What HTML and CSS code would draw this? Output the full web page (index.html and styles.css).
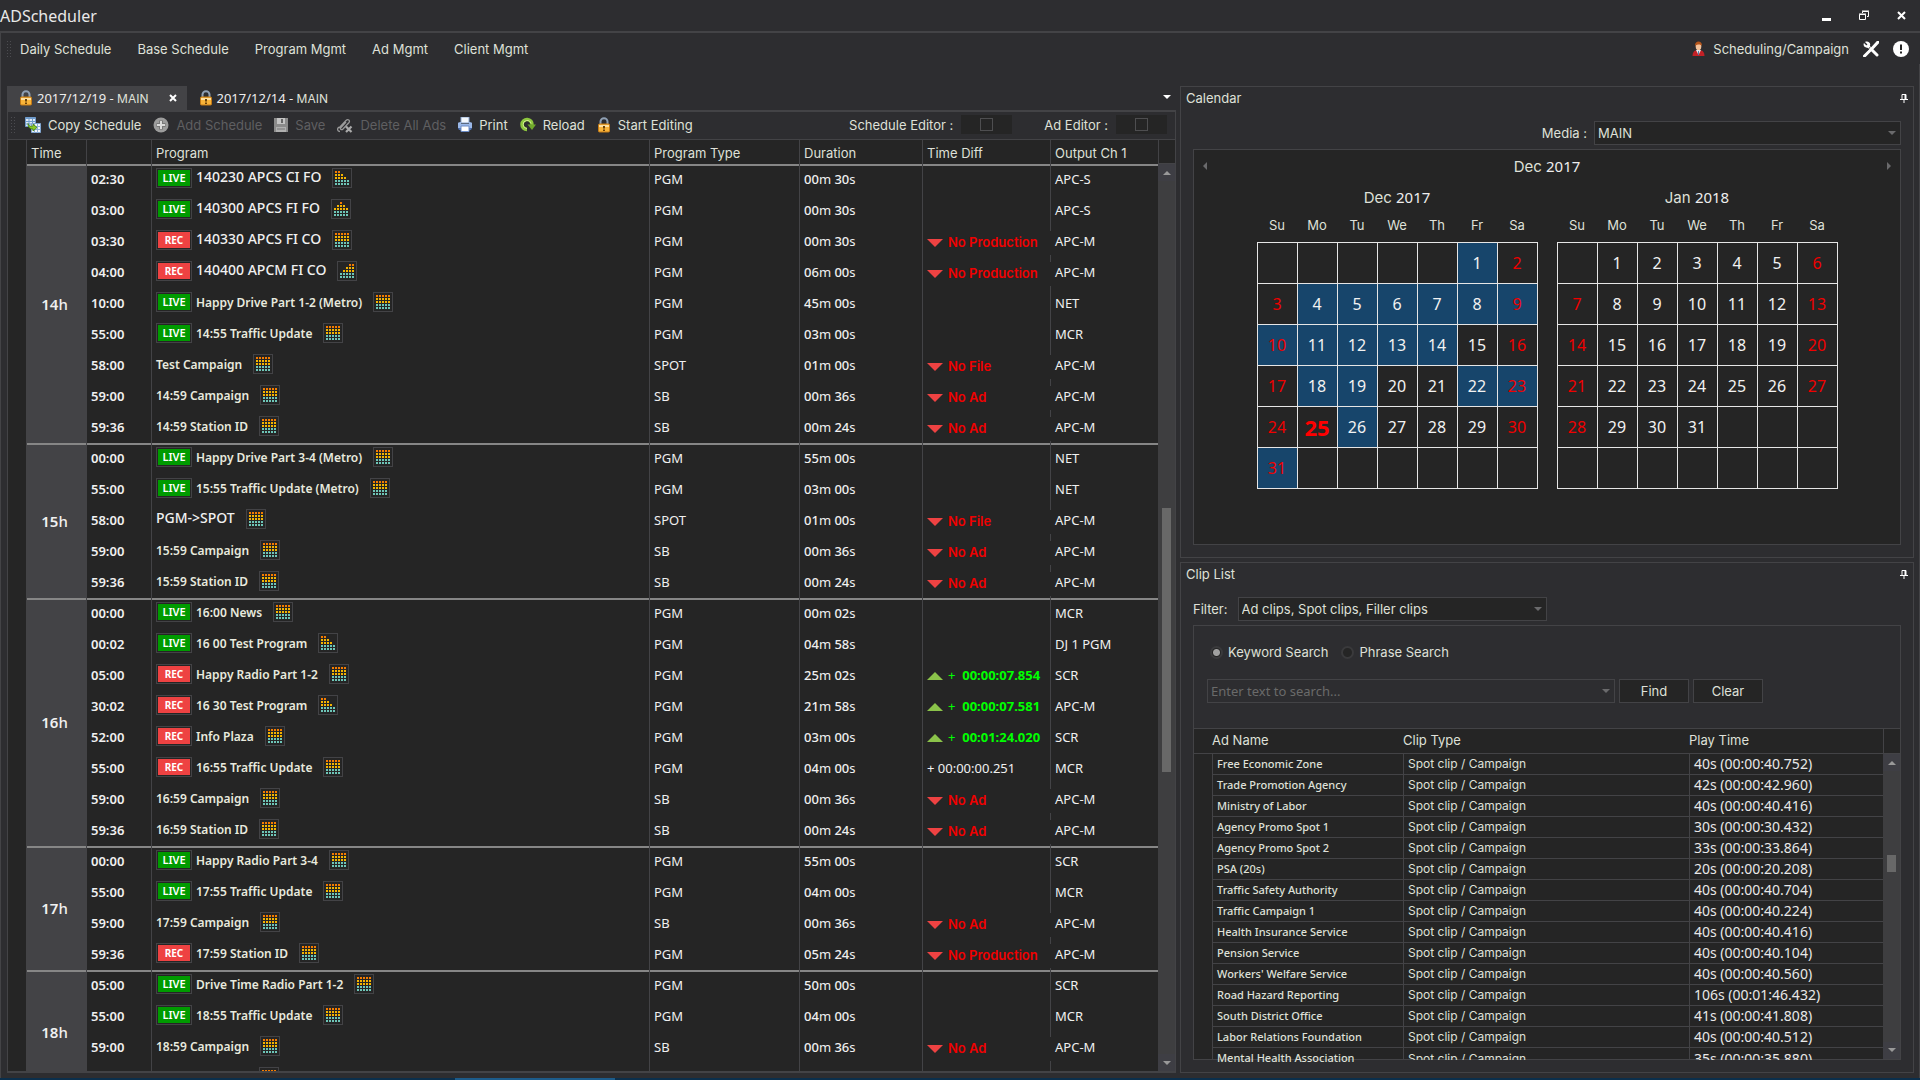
FILE: index.html
```html
<!DOCTYPE html>
<html lang="en">
<head>
<meta charset="utf-8">
<title>ADScheduler</title>
<link rel="stylesheet" href="styles.css">
</head>
<body>
<svg class="defs" aria-hidden="true">
  <symbol id="full" viewBox="0 0 20 20"><rect class="cell" x=".5" y=".5" width="19" height="19"/><path class="hi" d="M3 4h14"/><path class="mid" d="M3 7h14M3 10h14"/><path class="low" d="M3 13h14M3 16h14"/></symbol>
  <symbol id="fadeout" viewBox="0 0 20 20"><rect class="cell" x=".5" y=".5" width="19" height="19"/><path class="hi" d="M3 4h5"/><path class="mid" d="M3 7h8M3 10h11"/><path class="low" d="M3 13h14M3 16h14"/></symbol>
  <symbol id="fadein" viewBox="0 0 20 20"><rect class="cell" x=".5" y=".5" width="19" height="19"/><path class="hi" d="M12 4h5"/><path class="mid" d="M9 7h8M6 10h11"/><path class="low" d="M3 13h14M3 16h14"/></symbol>
  <symbol id="fadeboth" viewBox="0 0 20 20"><rect class="cell" x=".5" y=".5" width="19" height="19"/><path class="hi" d="M9 4h2"/><path class="mid" d="M6 7h8M3 10h14"/><path class="low" d="M3 13h14M3 16h14"/></symbol>
  <symbol id="lock" viewBox="0 0 14 16"><path d="M3.500 8V4.500a3.500 3.300 0 0 1 7 0V8" fill="none" stroke="#8fa0b4" stroke-width="2"/><rect x="1.500" y="7" width="11" height="8" rx="1" fill="#f9b43a" stroke="#c47b17"/><path d="M2 8h10v2H2z" fill="#ffe0a0"/><path d="M7 9v2.500M7 12.500v1.500" stroke="#6b4208" stroke-width="2"/></symbol>
  <symbol id="pin" viewBox="0 0 8 9"><path d="M2 5V.5h4V5M0 5.500h8M4 6v3" fill="none" stroke="#fff"/><path d="M4.500 1h1.500v4H4.500z" fill="#fff"/></symbol>
</svg>

<div class="window">
  <header class="titlebar">
    <h1>ADScheduler</h1>
    <div class="window-buttons">
      <button aria-label="Minimize"><svg width="10" height="12"><path d="M0 8h9v3H0z" fill="#fff"/></svg></button>
      <button aria-label="Restore"><svg width="11" height="11"><path d="M3.500 3V1.500h6v5H8M3 1h7" fill="none" stroke="#fff"/><path d="M.5 4.500h6v5h-6zM0 4h7" fill="none" stroke="#fff"/></svg></button>
      <button aria-label="Close"><svg width="9" height="9"><path d="M1 1l7 7M8 1L1 8" stroke="#fff" stroke-width="2"/></svg></button>
    </div>
  </header>

  <nav class="menubar">
    <span class="grip"></span>
    <div class="menus">
      <a href="#">Daily Schedule</a><a href="#">Base Schedule</a><a href="#">Program Mgmt</a><a href="#">Ad Mgmt</a><a href="#">Client Mgmt</a>
    </div>
    <div class="account">
      <svg width="13" height="16"><path d="M.5 15c0-3.500 1.500-5 3-5.500h6c1.500.5 3 2 3 5.500z" fill="#c32026"/><path d="M4 9h5l-2.500 5z" fill="#e8edf2"/><path d="M6.500 10v4" stroke="#5a7ea6"/><ellipse cx="6.500" cy="5.500" rx="2.800" ry="3.800" fill="#f3c199"/><path d="M3 5c-.5-6 7.500-6 7 0-1-2-5-2-7 0z" fill="#b5551b"/></svg>
      <span>Scheduling/Campaign</span>
      <button aria-label="Settings"><svg width="16" height="16"><path d="M15 1L9.500 7M7.500 9L1.500 15" stroke="#fff" stroke-width="3" stroke-linecap="round"/><path d="M5 5l9 9" stroke="#fff" stroke-width="3" stroke-linecap="round"/><path d="M2 1l2.500 2.500-1 1L1 2C-.5 4.500 2 7.500 5 6.500l2-2C8 2 5-.5 2 1z" fill="#fff"/><path d="M7.500 5.500l-3 4" stroke="#2d2d30" stroke-width=".8"/></svg></button>
      <button aria-label="Alerts"><svg width="16" height="16"><circle cx="8" cy="8" r="8" fill="#fff"/><path d="M8 3.500v5.500M8 10.500v2" stroke="#222" stroke-width="2"/></svg></button>
    </div>
  </nav>

  <main class="workspace">
    <section class="schedule">
      <div class="tabs">
        <button class="tab active"><svg class="lock"><use href="#lock"/></svg><span>2017/12/19 - <i>MAIN</i></span><svg class="close" width="8" height="8"><path d="M1 1l6 6M7 1L1 7" stroke="#fff" stroke-width="2"/></svg></button>
        <button class="tab"><svg class="lock"><use href="#lock"/></svg><span>2017/12/14 - <i>MAIN</i></span></button>
        <span class="caret-white"></span>
      </div>
      <div class="frame">
        <div class="toolbar">
          <span class="grip"></span>
          <button><svg width="16" height="16"><path d="M.5.5h10v9H.5z" fill="#dfeaf6" stroke="#6f9bcb"/><path d="M.5 1.500h10M.5 4.500h10M.5 7h10M4 1v8M7.500 1v8" stroke="#6f9bcb"/><path d="M6.500 6.500h9v9h-9z" fill="#f2f6fb" stroke="#7ea3cf"/><path d="M6.500 9.500h9M6.500 12.500h9M9.500 7v9M12.500 7v9" stroke="#8fb0d6"/><path d="M3 6.500c1 3 3 3 5 2.500V7l4 3.500-4 3.500v-2C5 12 3 10.500 3 6.500z" fill="#8ac926" stroke="#3f7d12" stroke-width=".8"/></svg>Copy Schedule</button>
          <button disabled><svg width="16" height="16"><circle cx="8" cy="8" r="7.500" fill="#9c9c9c"/><path d="M8 3.500v9M3.500 8h9" stroke="#777" stroke-width="4"/><path d="M8 4v8M4 8h8" stroke="#dadada" stroke-width="2"/></svg>Add Schedule</button>
          <button disabled><svg width="14" height="14"><path d="M0 0h14v14H0z" fill="#8b8b8b"/><path d="M3 0h8v6H3z" fill="#c4c4c4"/><path d="M7 1h2v4H7z" fill="#666"/><path d="M2 9h10v5H2z" fill="#b0b0b0"/><path d="M3 11h8" stroke="#777"/></svg>Save</button>
          <button disabled><svg width="16" height="16"><path d="M2 11L9 3.500c2-2 4.500 0 3 2L6 12c-1.500 1.500-3.500 0-2-1.500L9 5M3 14.500c-3 0-3-3-1-4.500" fill="none" stroke="#9a9a9a" stroke-width="1.300"/><path d="M9 9.500l5.500 5.500M14.500 9.500L9 15" stroke="#aaa" stroke-width="2.200"/></svg>Delete All Ads</button>
          <button><svg width="14" height="15"><path d="M3 0h8v6H3z" fill="#f4f8fd" stroke="#8aa7d0"/><path d="M0 6c0-1 3-1 3-1v2h8V5s3 0 3 1v5H0z" fill="#9bb8e8"/><path d="M0 11h14l-1 2H1z" fill="#4c6fb0"/><path d="M3 9h8v5.500H3z" fill="#fff" stroke="#6c8cc6"/></svg>Print</button>
          <button><svg width="16" height="15"><path d="M7 12.500A5 5 0 1 1 12 8" fill="none" stroke="#8dc63f" stroke-width="3.600"/><path d="M7 11.500a4 4 0 1 1 4-5" fill="none" stroke="#d3ee8f"/><path d="M7.500 7.500h8.500L12 13z" fill="#6fa82b"/></svg>Reload</button>
          <button><svg class="lock"><use href="#lock"/></svg>Start Editing</button>
          <div class="editors">
            <label>Schedule Editor :<span class="checkwell"><input type="checkbox"></span></label>
            <label>Ad Editor :<span class="checkwell"><input type="checkbox"></span></label>
          </div>
        </div>
        <div class="grid">
          <table class="programs">
            <colgroup><col class="c-mark"><col class="c-hour"><col class="c-time"><col><col class="c-type"><col class="c-dur"><col class="c-diff"><col class="c-out"></colgroup>
            <thead><tr><th></th><th>Time</th><th></th><th>Program</th><th>Program Type</th><th>Duration</th><th>Time Diff</th><th>Output Ch 1</th></tr></thead>
            <tbody>
              <tr><td rowspan="9"></td><th rowspan="9" scope="rowgroup"><b>14</b>h</th><td>02:30</td><td><div class="pgm"><b class="live">LIVE</b><span class="plain">140230 APCS CI FO</span><svg><use href="#fadeout"/></svg></div></td><td>PGM</td><td><b>00</b>m <b>30</b>s</td><td></td><td>APC-S</td></tr>
              <tr><td>03:00</td><td><div class="pgm"><b class="live">LIVE</b><span class="plain">140300 APCS FI FO</span><svg><use href="#fadeboth"/></svg></div></td><td>PGM</td><td><b>00</b>m <b>30</b>s</td><td></td><td>APC-S</td></tr>
              <tr><td>03:30</td><td><div class="pgm"><b class="rec">REC</b><span class="plain">140330 APCS FI CO</span><svg><use href="#full"/></svg></div></td><td>PGM</td><td><b>00</b>m <b>30</b>s</td><td class="warn">No Production</td><td>APC-M</td></tr>
              <tr><td>04:00</td><td><div class="pgm"><b class="rec">REC</b><span class="plain">140400 APCM FI CO</span><svg><use href="#fadein"/></svg></div></td><td>PGM</td><td><b>06</b>m <b>00</b>s</td><td class="warn">No Production</td><td>APC-M</td></tr>
              <tr><td>10:00</td><td><div class="pgm"><b class="live">LIVE</b><span>Happy Drive Part 1-2 (Metro)</span><svg><use href="#full"/></svg></div></td><td>PGM</td><td><b>45</b>m <b>00</b>s</td><td></td><td>NET</td></tr>
              <tr><td>55:00</td><td><div class="pgm"><b class="live">LIVE</b><span>14:55 Traffic Update</span><svg><use href="#full"/></svg></div></td><td>PGM</td><td><b>03</b>m <b>00</b>s</td><td></td><td>MCR</td></tr>
              <tr><td>58:00</td><td><div class="pgm"><span>Test Campaign</span><svg><use href="#full"/></svg></div></td><td>SPOT</td><td><b>01</b>m <b>00</b>s</td><td class="warn">No File</td><td>APC-M</td></tr>
              <tr><td>59:00</td><td><div class="pgm"><span>14:59 Campaign</span><svg><use href="#full"/></svg></div></td><td>SB</td><td><b>00</b>m <b>36</b>s</td><td class="warn">No Ad</td><td>APC-M</td></tr>
              <tr><td>59:36</td><td><div class="pgm"><span>14:59 Station ID</span><svg><use href="#full"/></svg></div></td><td>SB</td><td><b>00</b>m <b>24</b>s</td><td class="warn">No Ad</td><td>APC-M</td></tr>
            </tbody>
            <tbody>
              <tr><td rowspan="5"></td><th rowspan="5" scope="rowgroup"><b>15</b>h</th><td>00:00</td><td><div class="pgm"><b class="live">LIVE</b><span>Happy Drive Part 3-4 (Metro)</span><svg><use href="#full"/></svg></div></td><td>PGM</td><td><b>55</b>m <b>00</b>s</td><td></td><td>NET</td></tr>
              <tr><td>55:00</td><td><div class="pgm"><b class="live">LIVE</b><span>15:55 Traffic Update (Metro)</span><svg><use href="#full"/></svg></div></td><td>PGM</td><td><b>03</b>m <b>00</b>s</td><td></td><td>NET</td></tr>
              <tr><td>58:00</td><td><div class="pgm"><span class="plain">PGM-&gt;SPOT</span><svg><use href="#full"/></svg></div></td><td>SPOT</td><td><b>01</b>m <b>00</b>s</td><td class="warn">No File</td><td>APC-M</td></tr>
              <tr><td>59:00</td><td><div class="pgm"><span>15:59 Campaign</span><svg><use href="#full"/></svg></div></td><td>SB</td><td><b>00</b>m <b>36</b>s</td><td class="warn">No Ad</td><td>APC-M</td></tr>
              <tr><td>59:36</td><td><div class="pgm"><span>15:59 Station ID</span><svg><use href="#full"/></svg></div></td><td>SB</td><td><b>00</b>m <b>24</b>s</td><td class="warn">No Ad</td><td>APC-M</td></tr>
            </tbody>
            <tbody>
              <tr><td rowspan="8"></td><th rowspan="8" scope="rowgroup"><b>16</b>h</th><td>00:00</td><td><div class="pgm"><b class="live">LIVE</b><span>16:00 News</span><svg><use href="#full"/></svg></div></td><td>PGM</td><td><b>00</b>m <b>02</b>s</td><td></td><td>MCR</td></tr>
              <tr><td>00:02</td><td><div class="pgm"><b class="live">LIVE</b><span>16 00 Test Program</span><svg><use href="#fadeout"/></svg></div></td><td>PGM</td><td><b>04</b>m <b>58</b>s</td><td></td><td>DJ 1 PGM</td></tr>
              <tr><td>05:00</td><td><div class="pgm"><b class="rec">REC</b><span>Happy Radio Part 1-2</span><svg><use href="#full"/></svg></div></td><td>PGM</td><td><b>25</b>m <b>02</b>s</td><td class="over">+ &nbsp;<b>00:00:07.854</b></td><td>SCR</td></tr>
              <tr><td>30:02</td><td><div class="pgm"><b class="rec">REC</b><span>16 30 Test Program</span><svg><use href="#fadeout"/></svg></div></td><td>PGM</td><td><b>21</b>m <b>58</b>s</td><td class="over">+ &nbsp;<b>00:00:07.581</b></td><td>APC-M</td></tr>
              <tr><td>52:00</td><td><div class="pgm"><b class="rec">REC</b><span>Info Plaza</span><svg><use href="#full"/></svg></div></td><td>PGM</td><td><b>03</b>m <b>00</b>s</td><td class="over">+ &nbsp;<b>00:01:24.020</b></td><td>SCR</td></tr>
              <tr><td>55:00</td><td><div class="pgm"><b class="rec">REC</b><span>16:55 Traffic Update</span><svg><use href="#full"/></svg></div></td><td>PGM</td><td><b>04</b>m <b>00</b>s</td><td>+ 00:00:00.251</td><td>MCR</td></tr>
              <tr><td>59:00</td><td><div class="pgm"><span>16:59 Campaign</span><svg><use href="#full"/></svg></div></td><td>SB</td><td><b>00</b>m <b>36</b>s</td><td class="warn">No Ad</td><td>APC-M</td></tr>
              <tr><td>59:36</td><td><div class="pgm"><span>16:59 Station ID</span><svg><use href="#full"/></svg></div></td><td>SB</td><td><b>00</b>m <b>24</b>s</td><td class="warn">No Ad</td><td>APC-M</td></tr>
            </tbody>
            <tbody>
              <tr><td rowspan="4"></td><th rowspan="4" scope="rowgroup"><b>17</b>h</th><td>00:00</td><td><div class="pgm"><b class="live">LIVE</b><span>Happy Radio Part 3-4</span><svg><use href="#full"/></svg></div></td><td>PGM</td><td><b>55</b>m <b>00</b>s</td><td></td><td>SCR</td></tr>
              <tr><td>55:00</td><td><div class="pgm"><b class="live">LIVE</b><span>17:55 Traffic Update</span><svg><use href="#full"/></svg></div></td><td>PGM</td><td><b>04</b>m <b>00</b>s</td><td></td><td>MCR</td></tr>
              <tr><td>59:00</td><td><div class="pgm"><span>17:59 Campaign</span><svg><use href="#full"/></svg></div></td><td>SB</td><td><b>00</b>m <b>36</b>s</td><td class="warn">No Ad</td><td>APC-M</td></tr>
              <tr><td>59:36</td><td><div class="pgm"><b class="rec">REC</b><span>17:59 Station ID</span><svg><use href="#full"/></svg></div></td><td>PGM</td><td><b>05</b>m <b>24</b>s</td><td class="warn">No Production</td><td>APC-M</td></tr>
            </tbody>
            <tbody>
              <tr><td rowspan="4"></td><th rowspan="4" scope="rowgroup"><b>18</b>h</th><td>05:00</td><td><div class="pgm"><b class="live">LIVE</b><span>Drive Time Radio Part 1-2</span><svg><use href="#full"/></svg></div></td><td>PGM</td><td><b>50</b>m <b>00</b>s</td><td></td><td>SCR</td></tr>
              <tr><td>55:00</td><td><div class="pgm"><b class="live">LIVE</b><span>18:55 Traffic Update</span><svg><use href="#full"/></svg></div></td><td>PGM</td><td><b>04</b>m <b>00</b>s</td><td></td><td>MCR</td></tr>
              <tr><td>59:00</td><td><div class="pgm"><span>18:59 Campaign</span><svg><use href="#full"/></svg></div></td><td>SB</td><td><b>00</b>m <b>36</b>s</td><td class="warn">No Ad</td><td>APC-M</td></tr>
              <tr><td></td><td><div class="pgm"><span>18:59 Station ID</span><svg><use href="#full"/></svg></div></td><td></td><td></td><td></td><td></td></tr>
            </tbody>
          </table>
          <div class="scroll">
            <span class="corner"></span>
            <div class="track"><span class="up"></span><span class="gap-a"></span><span class="thumb"></span><span class="gap-b"></span><span class="down"></span></div>
          </div>
        </div>
      </div>
    </section>

    <div class="side">
      <section class="panel calendar">
        <header><h2>Calendar</h2><svg width="8" height="9"><use href="#pin"/></svg></header>
        <div class="field media"><label for="media">Media :</label><span class="combo"><select id="media"><option>MAIN</option></select></span></div>
        <div class="months">
          <div class="range"><button class="prev" aria-label="Previous"></button><h3>Dec <span>2017</span></h3><button class="next" aria-label="Next"></button></div>
          <div class="pair">
            <table class="month">
              <caption>Dec <span>2017</span></caption>
              <thead><tr><th>Su</th><th>Mo</th><th>Tu</th><th>We</th><th>Th</th><th>Fr</th><th>Sa</th></tr></thead>
              <tbody>
                <tr><td></td><td></td><td></td><td></td><td></td><td class="on">1</td><td>2</td></tr>
                <tr><td>3</td><td class="on">4</td><td class="on">5</td><td class="on">6</td><td class="on">7</td><td class="on">8</td><td class="on">9</td></tr>
                <tr><td class="on">10</td><td class="on">11</td><td class="on">12</td><td class="on">13</td><td class="on">14</td><td>15</td><td>16</td></tr>
                <tr><td>17</td><td class="on">18</td><td class="on">19</td><td>20</td><td>21</td><td class="on">22</td><td class="on">23</td></tr>
                <tr><td>24</td><td class="today">25</td><td class="on">26</td><td>27</td><td>28</td><td>29</td><td>30</td></tr>
                <tr><td class="on">31</td><td></td><td></td><td></td><td></td><td></td><td></td></tr>
              </tbody>
            </table>
            <table class="month">
              <caption>Jan <span>2018</span></caption>
              <thead><tr><th>Su</th><th>Mo</th><th>Tu</th><th>We</th><th>Th</th><th>Fr</th><th>Sa</th></tr></thead>
              <tbody>
                <tr><td></td><td>1</td><td>2</td><td>3</td><td>4</td><td>5</td><td>6</td></tr>
                <tr><td>7</td><td>8</td><td>9</td><td>10</td><td>11</td><td>12</td><td>13</td></tr>
                <tr><td>14</td><td>15</td><td>16</td><td>17</td><td>18</td><td>19</td><td>20</td></tr>
                <tr><td>21</td><td>22</td><td>23</td><td>24</td><td>25</td><td>26</td><td>27</td></tr>
                <tr><td>28</td><td>29</td><td>30</td><td>31</td><td></td><td></td><td></td></tr>
                <tr><td></td><td></td><td></td><td></td><td></td><td></td><td></td></tr>
              </tbody>
            </table>
          </div>
        </div>
      </section>

      <section class="panel cliplist">
        <header><h2>Clip List</h2><svg width="8" height="9"><use href="#pin"/></svg></header>
        <div class="field filter"><label for="filter">Filter:</label><span class="combo"><select id="filter"><option>Ad clips, Spot clips, Filler clips</option></select></span></div>
        <div class="clips">
          <form class="search">
            <div class="modes">
              <label><input type="radio" name="mode" checked>Keyword Search</label>
              <label><input type="radio" name="mode">Phrase Search</label>
            </div>
            <div class="query">
              <span class="combo"><input type="text" aria-label="Search text" placeholder="Enter text to search..."></span>
              <button type="button">Find</button><button type="button">Clear</button>
            </div>
          </form>
          <div class="cliprows">
            <table>
              <colgroup><col class="k-mark"><col class="k-name"><col><col class="k-time"></colgroup>
              <thead><tr><th></th><th>Ad Name</th><th>Clip Type</th><th>Play Time</th></tr></thead>
              <tbody>
                <tr><td></td><td>Free Economic Zone</td><td>Spot clip / Campaign</td><td>40s (00:00:40.752)</td></tr>
                <tr><td></td><td>Trade Promotion Agency</td><td>Spot clip / Campaign</td><td>42s (00:00:42.960)</td></tr>
                <tr><td></td><td>Ministry of Labor</td><td>Spot clip / Campaign</td><td>40s (00:00:40.416)</td></tr>
                <tr><td></td><td>Agency Promo Spot 1</td><td>Spot clip / Campaign</td><td>30s (00:00:30.432)</td></tr>
                <tr><td></td><td>Agency Promo Spot 2</td><td>Spot clip / Campaign</td><td>33s (00:00:33.864)</td></tr>
                <tr><td></td><td>PSA (20s)</td><td>Spot clip / Campaign</td><td>20s (00:00:20.208)</td></tr>
                <tr><td></td><td>Traffic Safety Authority</td><td>Spot clip / Campaign</td><td>40s (00:00:40.704)</td></tr>
                <tr><td></td><td>Traffic Campaign 1</td><td>Spot clip / Campaign</td><td>40s (00:00:40.224)</td></tr>
                <tr><td></td><td>Health Insurance Service</td><td>Spot clip / Campaign</td><td>40s (00:00:40.416)</td></tr>
                <tr><td></td><td>Pension Service</td><td>Spot clip / Campaign</td><td>40s (00:00:40.104)</td></tr>
                <tr><td></td><td>Workers' Welfare Service</td><td>Spot clip / Campaign</td><td>40s (00:00:40.560)</td></tr>
                <tr><td></td><td>Road Hazard Reporting</td><td>Spot clip / Campaign</td><td>106s (00:01:46.432)</td></tr>
                <tr><td></td><td>South District Office</td><td>Spot clip / Campaign</td><td>41s (00:00:41.808)</td></tr>
                <tr><td></td><td>Labor Relations Foundation</td><td>Spot clip / Campaign</td><td>40s (00:00:40.512)</td></tr>
                <tr class="partial"><td></td><td><div class="name">Mental Health Association</div></td><td><div>Spot clip / Campaign</div></td><td><div>35s (00:00:35.880)</div></td></tr>
              </tbody>
            </table>
            <div class="scroll">
              <span class="corner"></span>
              <div class="track"><span class="up"></span><span class="gap-a"></span><span class="thumb"></span><span class="gap-b"></span><span class="down"></span></div>
            </div>
          </div>
        </div>
      </section>
    </div>
  </main>
  <footer class="edge"><span></span></footer>
</div>
</body>
</html>
```
FILE: styles.css
```css
:root {
  --bg: #2d2d30;
  --dark: #252525;
  --line: #434346;
  --text: #dfe0d8;
  --ui: Inter, "Liberation Sans", sans-serif;
  --num: "Noto Sans", "Open Sans", sans-serif;
}
* { box-sizing: border-box; }
body { margin: 0; background: var(--bg); color: var(--text); font: 13px/16px var(--ui); }
h1, h2, h3 { margin: 0; font-weight: 400; }
button { border: 0; background: none; padding: 0; color: inherit; font: inherit; }
a { color: inherit; text-decoration: none; }
table { border-spacing: 0; table-layout: fixed; width: 100%; }
th, td { padding: 0; text-align: left; font-weight: 400; white-space: nowrap; }
svg { flex: none; display: block; }
.defs { position: absolute; width: 0; height: 0; }
.hi, .mid, .low { fill: none; stroke-width: 2; stroke-dasharray: 2 1; }
.hi { stroke: #f57c00; }
.mid { stroke: #f5b400; }
.low { stroke: #6ec6b8; }
.cell { fill: none; stroke: var(--line); }

.window { display: flex; flex-direction: column; height: 100vh; min-height: 720px; }

.titlebar { display: flex; justify-content: space-between; align-items: center; height: 33px; border-bottom: 2px solid var(--line); padding-right: 14px; flex: none; }
.titlebar h1 { font: 16px/24px var(--num); color: #e8e8e8; }
.window-buttons { display: flex; gap: 27px; align-items: center; }

.menubar { display: flex; align-items: center; height: 31px; flex: none; padding: 0 11px 0 5px; border-left: 1px solid var(--line); }
.grip { width: 5px; height: 18px; flex: none; background: radial-gradient(circle, #4c4c50 1px, transparent 1px) 0 0 / 3px 3px; }
.menus { display: flex; gap: 26px; margin-left: 9px; }
.account { display: flex; align-items: center; margin-left: auto; gap: 14px; }
.account span { margin-left: -6px; }

.workspace { flex: 1; min-height: 0; display: grid; grid-template-columns: minmax(0, 1169fr) minmax(0, 734fr); gap: 4px; padding: 22px 5px 5px 6px; border-left: 1px solid var(--line); border-right: 1px solid var(--line); }

.schedule { display: flex; flex-direction: column; min-height: 0; }
.tabs { display: flex; height: 24px; align-items: stretch; flex: none; }
.tab { display: flex; align-items: center; gap: 4px; padding: 0 12px; font: 13px/16px var(--num); color: #eee; }
.tab i { font-style: normal; font-family: var(--ui); font-size: 12px; color: var(--text); }
.tab.active { background: var(--line); padding-right: 10px; }
.tab .close { margin-left: 16px; }
.lock { width: 14px; height: 16px; }
.caret-white { margin: 9px 5px 0 auto; border: 4px solid transparent; border-top: 4px solid #fff; height: 4px; }
.frame { flex: 1; min-height: 0; display: flex; flex-direction: column; border: 2px solid var(--line); border-left-width: 1px; border-right-width: 1px; }
.toolbar { display: flex; align-items: center; height: 28px; flex: none; padding: 0 8px 2px 2px; border-bottom: 1px solid var(--line); }
.toolbar button { display: flex; align-items: center; gap: 7px; margin-right: 12px; }
.toolbar .grip { margin-right: 10px; }
.toolbar button:disabled { color: #5f5f61; }
.editors { display: flex; gap: 32px; margin-left: auto; }
.editors label { display: flex; align-items: center; gap: 8px; }
.checkwell { display: flex; align-items: center; justify-content: center; width: 51px; height: 19px; background: var(--dark); }
.checkwell input { appearance: none; margin: 0; width: 13px; height: 13px; border: 1px solid #4e4e50; }

.grid { flex: 1; min-height: 0; display: flex; align-items: stretch; background: var(--dark); overflow: hidden; }
.programs { flex: 1; min-width: 0; align-self: flex-start; }
.c-mark { width: 19px; } .c-hour { width: 60px; } .c-time { width: 65px; } .c-type { width: 150px; }
.c-dur { width: 123px; } .c-diff { width: 128px; } .c-out { width: 107px; }
.programs th, .programs td { border-right: 1px solid var(--line); padding-left: 4px; overflow: hidden; }
.programs thead th { height: 24px; padding-top: 2px; }
.programs tr > :last-child { border-right: 0; }
.programs tbody td { height: 31px; padding-bottom: 2px; font: 13px/18px var(--num); color: #f0f0f0; }
.programs tbody tr:first-child > * { box-shadow: inset 0 2px #868686; }
.programs tbody tr:first-child > td:first-child { box-shadow: none; }
.programs tbody th { background: var(--line); text-align: center; padding: 0 4px 0 0; font: 500 15px/20px var(--num); color: #f0f0f0; }
.programs tbody th b { font-weight: 600; }
.programs tbody th + td, .programs tr:not(:first-child) td:first-child { font-weight: 600; }
.programs td b { font-weight: 500; }
.pgm { display: flex; align-items: center; height: 20px; margin-bottom: 2px; }
.pgm span { font: 600 12px/18px var(--num); padding-top: 2px; color: #e8eade; }
.pgm .plain { font: 500 14px/18px var(--num); padding: 0 0 2px; color: #f0f0f0; }
.pgm svg { width: 20px; height: 20px; margin-left: 11px; }
.programs .pgm b { width: 36px; height: 20px; margin-right: 4px; border: 1px solid var(--line); padding: 1px; background-clip: content-box; color: #fff; text-align: center; }
.programs .pgm .live { background-color: #009b00; font: 600 11px/16px var(--num); }
.programs .pgm .rec { background-color: #ee4242; font: 700 10px/16px var(--num); }
.programs tbody .warn { color: #f00000; font: 600 13px/18px var(--ui); border-right: 0; padding-top: 3px; background: linear-gradient(var(--line), var(--line)) right top / 1px 5px no-repeat, linear-gradient(var(--line), var(--line)) right bottom / 1px 2px no-repeat; }
.warn::before, .over::before { content: ""; display: inline-block; border: 8px solid transparent; border-bottom-width: 0; border-top-color: #ee4242; margin-right: 5px; }
.programs tbody .over { color: #0f0; }
.over::before { border-top-width: 0; border-bottom: 8px solid #8bc34a; }
.programs .over b { font-weight: 700; }

.scroll { width: 17px; flex: none; display: flex; flex-direction: column; }
.corner { height: 24px; border-left: 1px solid var(--line); border-bottom: 1px solid var(--line); flex: none; }
.track { flex: 1; min-height: 0; background: #3e3e40; display: flex; flex-direction: column; align-items: center; }
.up, .down { width: 17px; height: 17px; flex: none; background: #3e3e44; display: flex; align-items: center; justify-content: center; }
.up::before { content: ""; border: 4px solid transparent; border-top: 0; border-bottom-color: #999; }
.down::before { content: ""; border: 4px solid transparent; border-bottom: 0; border-top-color: #999; }
.thumb { width: 9px; background: #686868; }
.grid .gap-a { flex: 327; } .grid .thumb { flex: 264; } .grid .gap-b { flex: 282; }

.side { display: flex; flex-direction: column; gap: 4px; min-height: 0; }
.panel { border: 1px solid var(--line); display: flex; flex-direction: column; padding: 0 12px 12px; }
.panel > header { display: flex; justify-content: space-between; align-items: center; height: 22px; margin: 0 -7px; flex: none; }
.panel h2 { font-size: 13px; line-height: 16px; }
.calendar { height: 472px; flex: none; }
.cliplist { flex: 1; min-height: 0; }
.field { display: flex; align-items: center; flex: none; height: 24px; }
.combo { position: relative; display: block; height: 24px; background: var(--dark); border: 1px solid var(--line); }
.combo::after { content: ""; position: absolute; right: 4px; top: 9px; border: 4px solid transparent; border-top-color: #6a6a6c; border-bottom: 0; }
.combo select, .combo input { appearance: none; width: 100%; height: 100%; border: 0; padding: 0 3px; background: none; color: var(--text); font: 13px/20px var(--ui); outline: 0; }
.media { margin: 12px 0 4px; justify-content: flex-end; gap: 7px; }
.media .combo { width: 307px; }
.filter { margin: 12px 0 4px; gap: 10px; }
.filter .combo { width: 309px; }

.months { flex: 1; background: var(--dark); border: 1px solid var(--line); padding: 6px 9px; }
.range { display: flex; justify-content: space-between; align-items: center; height: 20px; }
.range h3, .month caption { font-size: 15px; line-height: 20px; }
.range span, .month caption span { font-family: var(--num); color: #eee; }
.prev, .next { border: 4px solid transparent; width: 4px; height: 8px; }
.prev { border-right-color: #6a6a6c; border-left: 0; }
.next { border-left-color: #6a6a6c; border-right: 0; }
.pair { display: flex; justify-content: center; gap: 19px; margin-top: 11px; }
.month { width: 281px; border-collapse: collapse; }
.month caption { margin-bottom: 6px; }
.month th { height: 28px; padding-bottom: 6px; text-align: center; font-size: 13px; line-height: 16px; }
.month td { height: 41px; border: 1px solid #e6e6e6; text-align: center; font: 16px/20px var(--num); color: #f2f2f2; }
.month td:first-child, .month td:last-child { color: #f00000; }
.month .on { background: #17456b; }
.month .today { color: #ff0000; font-weight: 700; font-size: 22px; }

.clips { flex: 1; min-height: 0; border: 1px solid var(--line); display: flex; flex-direction: column; }
.search { height: 102px; flex: none; padding: 18px 13px 0; }
.modes { display: flex; gap: 13px; margin-left: 3px; }
.modes label { display: flex; align-items: center; gap: 5px; }
.modes input { appearance: none; margin: 0; width: 13px; height: 13px; border: 2px solid #3a3a3c; border-radius: 50%; background: var(--dark); }
.modes input:checked { background: radial-gradient(circle, #a0a0a0 3px, var(--dark) 4px); }
.query { display: flex; gap: 4px; margin-top: 19px; }
.query .combo { width: 408px; background: none; }
.query input::placeholder { color: #6a6a6a; opacity: 1; font-family: var(--num); }
.query button { width: 70px; height: 24px; background: var(--dark); border: 1px solid var(--line); }
.cliprows { flex: 1; min-height: 0; display: flex; background: var(--dark); border-top: 1px solid var(--line); overflow: clip; overflow-clip-margin: 4px; }
.cliprows table { flex: 1; min-width: 0; align-self: flex-start; }
.k-mark { width: 18px; } .k-name { width: 191px; } .k-time { width: 194px; }
.cliprows th { height: 25px; padding-bottom: 2px; border-bottom: 1px solid var(--line); }
.cliprows td { height: 21px; border-bottom: 1px solid var(--line); border-left: 1px solid var(--line); padding-left: 4px; font-size: 12px; line-height: 18px; }
.cliprows td:first-child { border-left: 0; border-bottom: 0; }
.cliprows td:nth-child(2) { font: 500 11px/18px var(--num); }
.cliprows td:nth-child(4) { font: 14px/18px var(--num); color: #e8e8e8; }
.cliprows .partial td { height: 12px; border-bottom: 0; vertical-align: top; }
.partial div { height: 12px; padding-top: 2px; overflow: hidden; }
.partial .name { overflow: visible; padding-top: 1px; }
.cliprows .corner { height: 25px; }
.cliprows .gap-a { flex: 85; } .cliprows .thumb { flex: 17; } .cliprows .gap-b { flex: 172; }

.edge { height: 2px; flex: none; background: #0b2f4c; display: flex; }
.edge span { width: 160px; margin-left: 455px; background: #1c5b8a; }
```
